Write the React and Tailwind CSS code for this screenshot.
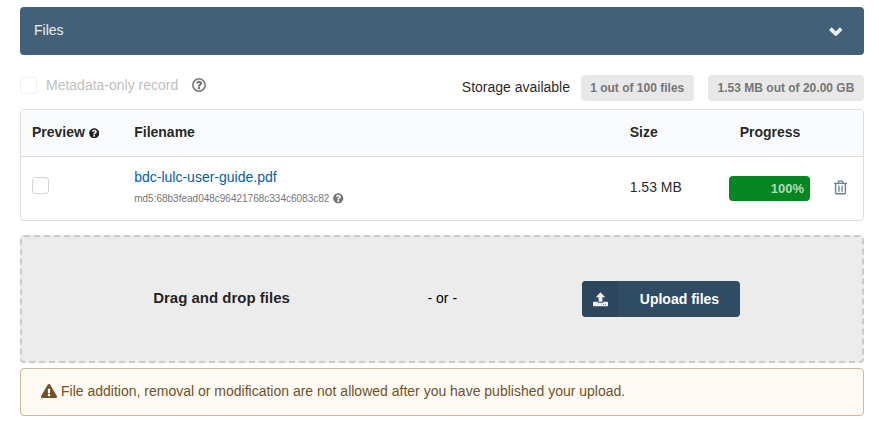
import {
  FaExclamationTriangle,
  FaQuestionCircle,
  FaRegQuestionCircle,
} from "react-icons/fa";

function ChevronIcon() {
  return (
    <svg
      className="mt-px h-[10px] w-[14px]"
      viewBox="0 0 14 10"
      fill="none"
      stroke="currentColor"
      strokeWidth="3.7"
      strokeLinejoin="round"
    >
      <path d="M1.4 1.6 6.8 7l5.4-5.4" />
    </svg>
  );
}

function TrashIcon() {
  return (
    <svg
      className="-mt-[3px] ml-[24px] h-[15px] w-[13px] text-[#6a8197]"
      viewBox="0 0 13 15"
      fill="none"
      stroke="currentColor"
      strokeWidth="1.4"
    >
      <path d="M0 3.4h13M4 3.2 4.7 1.1h3.6L9 3.2" />
      <path d="M1.6 3.4v9.3c0 .7.4 1.1 1.1 1.1h7.6c.7 0 1.1-.4 1.1-1.1V3.4" />
      <path d="M4.9 5.7v6M8.1 5.7v6" />
    </svg>
  );
}

function UploadIcon() {
  return (
    <svg className="h-[15px] w-[15px] text-white/90" viewBox="0 0 15 15" fill="currentColor">
      <path d="M7.5.2 12.2 5.2H9.4v4.6H5.6V5.2H2.8z" />
      <path
        fillRule="evenodd"
        d="M.9 9.7h3.8v.2c0 .5.4.9.9.9h3.8c.5 0 .9-.4.9-.9v-.2h3.8c.5 0 .9.4.9.9v2.8c0 .5-.4.9-.9.9H.9c-.5 0-.9-.4-.9-.9v-2.8c0-.5.4-.9.9-.9zm9.3 2.6v.8h.8v-.8zm2 0v.8h.8v-.8z"
      />
    </svg>
  );
}

function SectionHeader() {
  return (
    <div className="flex h-12 items-center justify-between rounded-[4px] bg-[#426077] pr-[21px] pl-3.5 text-white/90">
      <span className="-mt-[3px]">Files</span>
      <ChevronIcon />
    </div>
  );
}

function QuotaLabel({ children }) {
  return (
    <span className="flex h-[26px] items-center rounded-[4px] bg-[#e8e8e8] px-[9.7px] text-[12px] font-bold text-[#767676]">
      {children}
    </span>
  );
}

function Toolbar() {
  return (
    <div className="mt-5 flex h-[26px] items-center">
      <span className="-mt-[6px] flex items-center opacity-50">
        <span className="size-[17px] rounded-[3px] border border-[#e2e2e3] bg-white" />
        <span className="ml-[9px] text-[#808080]">Metadata-only record</span>
      </span>
      <FaRegQuestionCircle
        strokeWidth={8}
        className="-mt-[6px] ml-[14px] size-[14px] overflow-visible text-[#6b6b6b]"
      />
      <span className="-mt-[3px] mr-[10.5px] ml-auto text-black/87">Storage available</span>
      <QuotaLabel>1 out of 100 files</QuotaLabel>
      <span className="w-3.5" />
      <QuotaLabel>1.53 MB out of 20.00 GB</QuotaLabel>
    </div>
  );
}

function FileTable() {
  return (
    <div className="mt-2 h-28 overflow-hidden rounded-[4px] border border-[#dededf] text-black/87">
      <div className="grid h-[47px] grid-cols-[102.2px_495.5px_110px_1fr] items-center border-b border-[#dededf] bg-[#f9fafb] pb-[3px] pl-[11px] font-bold">
        <span className="flex items-center">
          Preview
          <FaQuestionCircle className="mt-[3px] ml-[4px] size-[10.5px]" />
        </span>
        <span>Filename</span>
        <span>Size</span>
        <span>Progress</span>
      </div>
      <div className="grid h-[63px] grid-cols-[102.2px_495.5px_99.3px_81px_1fr] items-center pl-[11px]">
        <span className="-mt-[6px] size-[17px] rounded-[3px] border border-[#d4d4d5] bg-white" />
        <div className="-mt-[3px]">
          <a className="block leading-5 text-[#045fa5]">bdc-lulc-user-guide.pdf</a>
          <div className="mt-[3px] flex items-center text-[10px] leading-[18px] text-[#767676]">
            md5:68b3fead048c96421768c334c6083c82
            <FaQuestionCircle className="ml-[4px] size-[10.5px]" />
          </div>
        </div>
        <span className="-mt-[4px]">1.53 MB</span>
        <div className="flex h-[25px] items-center justify-end rounded-[4px] bg-[#048620] pr-[6px] text-[13px] font-bold text-white/70">
          100%
        </div>
        <TrashIcon />
      </div>
    </div>
  );
}

function DropZone() {
  return (
    <div className="mt-3.5 grid h-32 grid-cols-[399px_1fr_280px] items-center rounded-[4px] border-2 border-dashed border-[#cbcbcb] bg-[#ececec] text-black/87">
      <span className="-mt-[2px] text-center text-[15px] font-bold">Drag and drop files</span>
      <span className="-mt-[2px] pl-[6.5px] text-black">- or -</span>
      <button className="flex h-9 w-[158px] overflow-hidden rounded-[4px] bg-[#2f4c63] font-bold text-white">
        <span className="flex h-9 w-9 items-center justify-center bg-[#2c475d]">
          <UploadIcon />
        </span>
        <span className="flex h-9 flex-1 items-center justify-center pl-px">Upload files</span>
      </button>
    </div>
  );
}

function Warning() {
  return (
    <div className="mt-[5px] flex h-12 items-center rounded-[4px] border border-[#c9ba9b] bg-[#fffaf3] pb-[3px] pl-5 text-[#6f5227]">
      <FaExclamationTriangle className="mr-[4px] size-[16px]" />
      <span>
        File addition, removal or modification are not allowed after you have published your upload.
      </span>
    </div>
  );
}

export default function App() {
  return (
    <main className="h-[432px] bg-white pt-[7px] pr-[15px] pl-5 font-['Liberation_Sans',Arial,sans-serif] text-[14px] leading-5">
      <SectionHeader />
      <Toolbar />
      <FileTable />
      <DropZone />
      <Warning />
    </main>
  );
}
